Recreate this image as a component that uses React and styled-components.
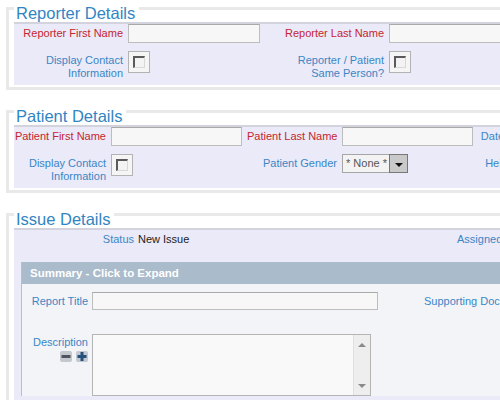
import React from "react";
import styled, { createGlobalStyle } from "styled-components";

const Global = createGlobalStyle`
  html, body { margin: 0; padding: 0; background: #fff; overflow: hidden; }
  body { font-family: "Liberation Sans", Arial, sans-serif; font-size: 11px; }
`;

const Page = styled.div`
  width: 760px;
  padding-top: 7px;
`;

const Section = styled.section`
  margin: ${(p) => p.$top}px 0 0 6px;
  border: 3px solid #e9e9e9;
  border-right: none;
  padding: 0 0 2px 5px;
`;

const Legend = styled.h2`
  margin: -5px 0 1px 0;
  padding: 0 4px 0 2px;
  width: fit-content;
  background: #fff;
  font: 400 16.5px/16px "Liberation Sans", Arial, sans-serif;
  color: #3185c3;
`;

const Panel = styled.div`
  background: #eaeaf9;
  border-top: 2px solid #d3d3de;
  padding: 0 0 ${(p) => p.$bottom ?? 5}px 0;
`;

const FormGrid = styled.div`
  display: grid;
  grid-template-columns: ${(p) => p.$cols};
  column-gap: 5px;
  row-gap: 8px;
  align-items: start;
`;

const Label = styled.label`
  display: block;
  text-align: right;
  line-height: 13px;
  color: ${(p) => (p.$required ? "#c5262f" : "#3a86c5")};
  white-space: nowrap;
  align-self: ${(p) => (p.$center ? "center" : "start")};
  padding-top: ${(p) => (p.$center ? 0 : 3)}px;
`;

const TextInput = styled.input`
  box-sizing: border-box;
  display: block;
  width: ${(p) => p.$w}px;
  height: ${(p) => p.$h ?? 19}px;
  margin: 0;
  padding: 1px 3px;
  border: 1px solid #bdbdbd;
  border-top-color: #a9a9a9;
  background: #f7f7f8;
  font: 11px "Liberation Sans", Arial, sans-serif;
  outline: none;
`;

const CheckBox = styled.span`
  box-sizing: border-box;
  display: flex;
  align-items: center;
  justify-content: center;
  width: 22px;
  height: 22px;
  border: 1px solid #b3b3b3;
  background: #f5f5f5;
`;

const CheckMark = styled.span`
  box-sizing: border-box;
  width: 12px;
  height: 12px;
  border-style: solid;
  border-width: 2px 1px 1px 2px;
  border-color: #5a5a5a #d8d8d8 #d8d8d8 #5a5a5a;
  background: #f3f3f3;
`;

const Select = styled.div`
  display: flex;
  width: fit-content;
  height: 19px;
`;

const SelectValue = styled.span`
  box-sizing: border-box;
  width: 47px;
  height: 19px;
  padding-left: 3px;
  border: 1px solid #a6a6a6;
  border-right: none;
  background: #f3f3f3;
  color: #555;
  line-height: 17px;
`;

const SelectButton = styled.span`
  box-sizing: border-box;
  display: flex;
  align-items: center;
  justify-content: center;
  width: 19px;
  height: 19px;
  border: 1px solid #777;
  background: #c9c9c9;
`;

const Caret = styled.span`
  width: 0;
  height: 0;
  border-left: 4px solid transparent;
  border-right: 4px solid transparent;
  border-top: 4px solid #111;
  margin-top: 2px;
`;

const StatusRow = styled.div`
  display: grid;
  grid-template-columns: 120px 315px auto;
  column-gap: 4px;
  padding-top: 2px;
  line-height: 14px;
`;

const Value = styled.span`
  color: #222;
`;

const Summary = styled.div`
  margin: 16px 0 0 7px;
  background: #f3f4f8;
  border-left: 1px solid #b6bfcb;
`;

const SummaryHeader = styled.div`
  height: 22px;
  padding-left: 8px;
  background: #aabbcb;
  color: #fff;
  font-weight: bold;
  font-size: 11.5px;
  line-height: 22px;
`;

const SummaryBody = styled.div`
  display: grid;
  grid-template-columns: 66px 286px auto;
  column-gap: 4px;
  row-gap: 24px;
  padding-top: 8px;
  align-items: start;
`;

const LabelStack = styled.div`
  display: flex;
  flex-direction: column;
  align-items: flex-end;
  gap: 2px;
  padding-top: 1px;
  line-height: 14px;
  color: #3a86c5;
`;

const IconRow = styled.div`
  display: flex;
  gap: 4px;
`;

const SideLabel = styled.span`
  color: #3a86c5;
  line-height: 14px;
  padding-left: ${(p) => p.$indent}px;
  align-self: center;
  white-space: nowrap;
`;

const TextBox = styled.div`
  box-sizing: border-box;
  display: flex;
  width: 279px;
  height: 62px;
  border: 1px solid #b5b5b5;
  background: #f9f9fa;
`;

const TextArea = styled.textarea`
  flex: 1;
  border: none;
  background: transparent;
  resize: none;
  overflow: hidden;
  margin: 0;
  padding: 2px;
  font: 11px "Liberation Sans", Arial, sans-serif;
  outline: none;
`;

const ScrollTrack = styled.div`
  width: 16px;
  display: flex;
  flex-direction: column;
  justify-content: space-between;
  align-items: center;
  padding: 8px 0 7px;
  background: #eeeeef;
  border-left: 1px solid #e0e0e0;
`;

const Arrow = styled.span`
  width: 0;
  height: 0;
  border-left: 4px solid transparent;
  border-right: 4px solid transparent;
  ${(p) => (p.$up ? "border-bottom: 4px solid #8a8a8a;" : "border-top: 4px solid #8a8a8a;")}
`;

const Check = () => (
  <CheckBox>
    <CheckMark />
  </CheckBox>
);

const MinusIcon = () => (
  <svg width="12" height="11" viewBox="0 0 12 11">
    <rect x="0" y="0" width="12" height="11" rx="2" fill="#c4c8cf" />
    <rect x="1.5" y="4" width="9" height="3" fill="#4e5560" />
  </svg>
);

const PlusIcon = () => (
  <svg width="12" height="11" viewBox="0 0 12 11">
    <rect x="0" y="0" width="12" height="11" rx="2" fill="#c4c8cf" />
    <rect x="1.5" y="4" width="9" height="3" fill="#24507e" />
    <rect x="4.5" y="1" width="3" height="9" fill="#24507e" />
  </svg>
);

export default function App() {
  return (
    <Page>
      <Global />
      <Section $top={0}>
        <Legend>Reporter Details</Legend>
        <Panel>
          <FormGrid $cols="109px 132px 119px 132px">
            <Label $required $center>Reporter First Name</Label>
            <TextInput $w={132} />
            <Label $required $center>Reporter Last Name</Label>
            <TextInput $w={132} />
            <Label>
              Display Contact
              <br />
              Information
            </Label>
            <Check />
            <Label>
              Reporter / Patient
              <br />
              Same Person?
            </Label>
            <Check />
          </FormGrid>
        </Panel>
      </Section>

      <Section $top={20}>
        <Legend>Patient Details</Legend>
        <Panel>
          <FormGrid $cols="92px 131px 90px 131px 64px">
            <Label $required $center>Patient First Name</Label>
            <TextInput $w={131} />
            <Label $required $center>Patient Last Name</Label>
            <TextInput $w={131} />
            <Label $center>Date of Birth</Label>
            <Label>
              Display Contact
              <br />
              Information
            </Label>
            <Check />
            <Label>Patient Gender</Label>
            <Select>
              <SelectValue>* None *</SelectValue>
              <SelectButton>
                <Caret />
              </SelectButton>
            </Select>
            <Label>Height (cm)</Label>
          </FormGrid>
        </Panel>
      </Section>

      <Section $top={20}>
        <Legend>Issue Details</Legend>
        <Panel $bottom={20}>
          <StatusRow>
            <Label as="span" $center>Status</Label>
            <Value>New Issue</Value>
            <SideLabel $indent={0}>Assigned To</SideLabel>
          </StatusRow>
          <Summary>
            <SummaryHeader>Summary - Click to Expand</SummaryHeader>
            <SummaryBody>
              <Label $center>Report Title</Label>
              <TextInput $w={286} $h={18} />
              <SideLabel $indent={42}>Supporting Documents</SideLabel>
              <LabelStack>
                <span>Description</span>
                <IconRow>
                  <MinusIcon />
                  <PlusIcon />
                </IconRow>
              </LabelStack>
              <TextBox>
                <TextArea />
                <ScrollTrack>
                  <Arrow $up />
                  <Arrow />
                </ScrollTrack>
              </TextBox>
              <span />
            </SummaryBody>
          </Summary>
        </Panel>
      </Section>
    </Page>
  );
}
